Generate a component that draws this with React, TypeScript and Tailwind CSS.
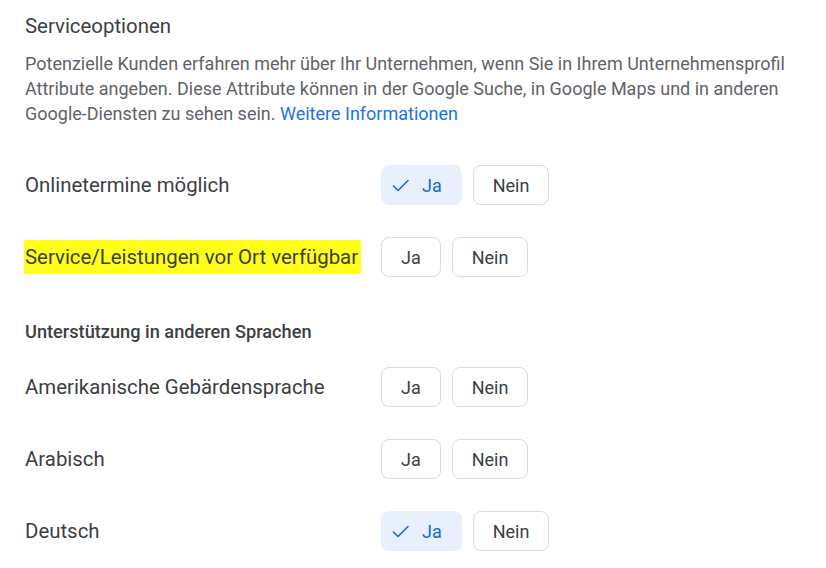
import React from 'react';

type Row = { label: string; value: 'ja' | 'nein' | null; highlight?: boolean };

const service: Row[] = [
  { label: 'Onlinetermine möglich', value: 'ja' },
  { label: 'Service/Leistungen vor Ort verfügbar', value: null, highlight: true },
];

const languages: Row[] = [
  { label: 'Amerikanische Gebärdensprache', value: null },
  { label: 'Arabisch', value: null },
  { label: 'Deutsch', value: 'ja' },
];

function Check() {
  return (
    <svg width="20" height="20" viewBox="0 0 20 20" fill="none" className="mr-[11px]">
      <path d="M2.5 11 L7 15.5 L17 5.5" stroke="#1967d2" strokeWidth="1.6" strokeLinecap="round" strokeLinejoin="round" />
    </svg>
  );
}

function Chip({ text, selected }: { text: string; selected: boolean }) {
  if (selected) {
    return (
      <button className="h-[40px] flex items-center pl-[10px] pr-[20px] rounded-[8px] bg-[#e8f0fe] text-[#1967d2] text-[18px]">
        <Check />
        {text}
      </button>
    );
  }
  return (
    <button className="h-[40px] flex items-center px-[19px] rounded-[8px] border border-[#dadce0] bg-white text-[#3c4043] text-[18px]">
      {text}
    </button>
  );
}

function AttrRow({ row }: { row: Row }) {
  return (
    <div className="flex items-center h-[40px]">
      <div className="w-[356px] text-[20.4px] text-[#3c4043]">
        {row.highlight ? (
          <span className="bg-[#ffff1a] py-[5px] pr-[3px] -ml-[1px] pl-[1px] rounded-[2px]">{row.label}</span>
        ) : (
          row.label
        )}
      </div>
      <div className="flex gap-[11px]">
        <Chip text="Ja" selected={row.value === 'ja'} />
        <Chip text="Nein" selected={row.value === 'nein'} />
      </div>
    </div>
  );
}

export default function App() {
  return (
    <div className="w-[826px] h-[568px] bg-white px-[25px] pt-[13px] font-['Roboto','Liberation_Sans',sans-serif] overflow-hidden">
      <h2 className="text-[20.4px] leading-[26px] text-[#3c4043]">Serviceoptionen</h2>
      <p className="mt-[12px] text-[18px] leading-[25px] text-[#5f6368] w-[792px]">
        Potenzielle Kunden erfahren mehr über Ihr Unternehmen, wenn Sie in Ihrem Unternehmensprofil Attribute angeben. Diese Attribute können in der Google Suche, in Google Maps und in anderen Google-Diensten zu sehen sein.{' '}
        <a className="text-[#1a73e8]">Weitere Informationen</a>
      </p>
      <div className="mt-[39px] flex flex-col gap-[32px]">
        {service.map((r) => (
          <AttrRow key={r.label} row={r} />
        ))}
      </div>
      <h3 className="mt-[43px] text-[18.2px] leading-[24px] font-medium text-[#3c4043]">Unterstützung in anderen Sprachen</h3>
      <div className="mt-[23px] flex flex-col gap-[32px]">
        {languages.map((r) => (
          <AttrRow key={r.label} row={r} />
        ))}
      </div>
    </div>
  );
}
